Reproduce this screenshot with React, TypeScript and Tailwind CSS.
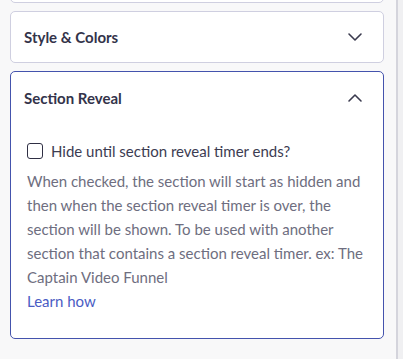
import React from "react";

function Chevron({ up }: { up?: boolean }) {
  return (
    <svg width="16" height="16" viewBox="0 0 16 16" fill="none" className="shrink-0">
      <path
        d={up ? "M2 11 L8 5 L14 11" : "M2 5 L8 11 L14 5"}
        stroke="#3a3a4e"
        strokeWidth="1.6"
        strokeLinecap="round"
        strokeLinejoin="round"
      />
    </svg>
  );
}

export default function App() {
  return (
    <div
      className="flex w-[403px] h-[359px] bg-[#f8f8f9] overflow-hidden"
      style={{ fontFamily: "Lato, 'Liberation Sans', sans-serif" }}
    >
      <div className="flex-1 flex flex-col gap-[8px] pl-[10px] pr-[12px]">
        <div className="h-[20px] -mt-[17px] shrink-0 rounded-[5px] border border-[#cfcfe0] bg-white" />
        <div className="h-[52px] shrink-0 rounded-[5px] border border-[#cfcfe0] bg-white flex items-center justify-between pl-[13px] pr-[20px]">
          <span className="text-[15px] font-bold text-[#33334a]">Style &amp; Colors</span>
          <Chevron />
        </div>
        <div className="h-[268px] shrink-0 rounded-[5px] border border-[#4453ad] bg-white flex flex-col">
          <div className="h-[52px] flex items-center justify-between pl-[13px] pr-[20px]">
            <span className="text-[15px] font-bold text-[#33334a]">Section Reveal</span>
            <Chevron up />
          </div>
          <div className="flex flex-col px-[16px] pt-[17px]">
            <label className="flex items-center gap-[8px]">
              <span className="w-[16px] h-[16px] rounded-[3px] border-[1.5px] border-[#2f2f44] bg-white shrink-0" />
              <span className="text-[15px] text-[#3c3c52] leading-[20px]">
                Hide until section reveal timer ends?
              </span>
            </label>
            <p className="mt-[8px] text-[15px] leading-[24px] text-[#6e6e80]">
              When checked, the section will start as hidden and then when the section reveal timer is over, the section will be shown. To be used with another section that contains a section reveal timer. ex: The Captain Video Funnel
            </p>
            <a className="text-[15px] leading-[24px] text-[#4a5cc4]">Learn how</a>
          </div>
        </div>
      </div>
      <div className="w-[7px] h-full border-l-[2px] border-[#d4d4dc] bg-[#f0f0f2]" />
    </div>
  );
}
